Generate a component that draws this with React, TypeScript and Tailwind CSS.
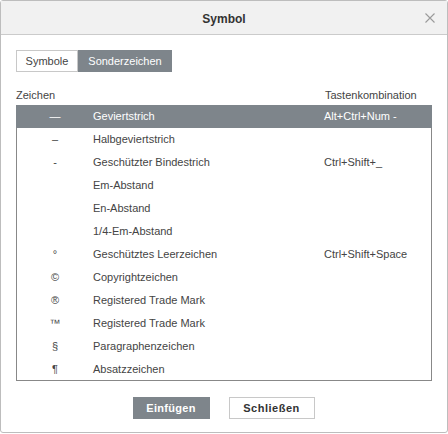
import React, { useState } from "react";

const ROWS = [
  { sym: "—", name: "Geviertstrich", keys: "Alt+Ctrl+Num -" },
  { sym: "–", name: "Halbgeviertstrich", keys: "" },
  { sym: "-", name: "Geschützter Bindestrich", keys: "Ctrl+Shift+_" },
  { sym: "", name: "Em-Abstand", keys: "" },
  { sym: "", name: "En-Abstand", keys: "" },
  { sym: "", name: "1/4-Em-Abstand", keys: "" },
  { sym: "°", name: "Geschütztes Leerzeichen", keys: "Ctrl+Shift+Space" },
  { sym: "©", name: "Copyrightzeichen", keys: "" },
  { sym: "®", name: "Registered Trade Mark", keys: "" },
  { sym: "™", name: "Registered Trade Mark", keys: "" },
  { sym: "§", name: "Paragraphenzeichen", keys: "" },
  { sym: "¶", name: "Absatzzeichen", keys: "" },
];

export default function App() {
  const [selected, setSelected] = useState(0);
  const [tab, setTab] = useState(1);

  return (
    <div className="h-[434px] w-[448px] bg-white font-['Liberation_Sans',Arial,sans-serif] text-[11px] text-[#444]">
      <div className="flex h-[433px] flex-col rounded-[3px] border border-[#bdbdbd]">
        {/* Title bar */}
        <div className="relative flex h-[34px] shrink-0 items-center justify-center border-b border-[#cbcbcb] bg-[#f1f1f1] pt-[2px]">
          <span className="text-[12px] font-semibold text-[#333]">Symbol</span>
          <svg
            className="absolute right-[12px] top-[12px]"
            width="10"
            height="10"
            viewBox="0 0 10 10"
          >
            <path d="M0.5 0.5L9.5 9.5M9.5 0.5L0.5 9.5" stroke="#9a9a9a" strokeWidth="1.1" />
          </svg>
        </div>

        {/* Tabs */}
        <div className="flex px-[15px] pt-[15px]">
          <button
            onClick={() => setTab(0)}
            className={`h-[22px] w-[62px] border text-[11px] ${
              tab === 0
                ? "border-[#7e858b] bg-[#7e858b] text-white"
                : "border-[#c8c8c8] bg-white text-[#444]"
            }`}
          >
            Symbole
          </button>
          <button
            onClick={() => setTab(1)}
            className={`h-[22px] w-[94px] border text-[11px] ${
              tab === 1
                ? "border-[#7e858b] bg-[#7e858b] text-white"
                : "border-[#c8c8c8] bg-white text-[#444]"
            }`}
          >
            Sonderzeichen
          </button>
        </div>

        {/* Column headers */}
        <div className="mt-[16px] flex h-[15px] items-center px-[15px]">
          <span className="flex-1">Zeichen</span>
          <span className="w-[107px]">Tastenkombination</span>
        </div>

        {/* List */}
        <div className="mx-[15px] mt-[2px] h-[276px] border-x border-b border-[#888]">
          {ROWS.map((row, i) => (
            <div
              key={i}
              onClick={() => setSelected(i)}
              className={`flex h-[23px] cursor-pointer items-center ${
                i === selected ? "-mx-px bg-[#7e858b] px-px text-white" : ""
              }`}
            >
              <span className="w-[76px] text-center">{row.sym}</span>
              <span className="flex-1">{row.name}</span>
              <span className="w-[107px]">{row.keys}</span>
            </div>
          ))}
        </div>

        {/* Buttons */}
        <div className="mt-[16px] flex justify-center gap-[19px] pr-[1px]">
          <button className="h-[22px] w-[77px] bg-[#7e858b] text-[11px] font-bold tracking-[0.3px] text-white">
            Einfügen
          </button>
          <button className="h-[22px] w-[86px] border border-[#c8c8c8] bg-white text-[11px] font-bold tracking-[0.5px] text-[#333]">
            Schließen
          </button>
        </div>
      </div>
    </div>
  );
}
